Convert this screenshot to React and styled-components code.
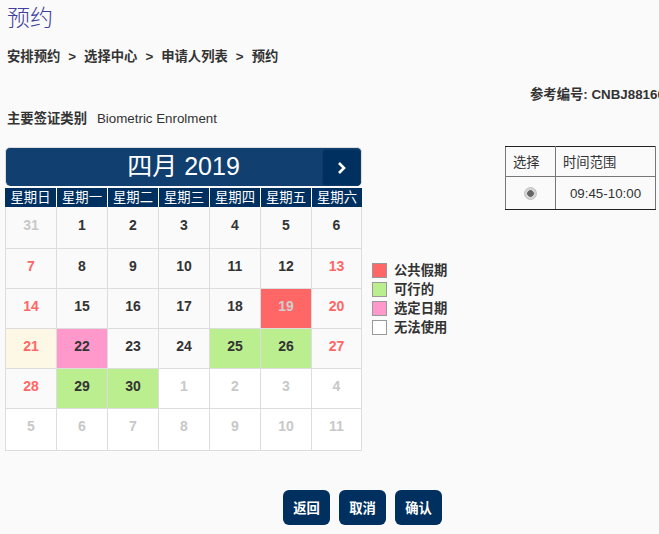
import React from 'react';
import styled, { createGlobalStyle } from 'styled-components';

const GlobalStyle = createGlobalStyle`
  html, body {
    margin: 0;
    padding: 0;
    background: #fafafa;
    overflow: hidden;
  }
  body {
    font-family: "Liberation Sans", "Noto Sans CJK SC", sans-serif;
    color: #333;
  }
`;

const Page = styled.div`
  width: 659px;
  height: 534px;
  overflow: hidden;
  box-sizing: border-box;
  padding: 4px 0 0 7px;
`;

const Title = styled.h1`
  margin: 0;
  font-size: 23px;
  line-height: 28px;
  font-weight: 300;
  color: #3f3f9f;
`;

const Breadcrumb = styled.div`
  display: flex;
  gap: 8px;
  margin-top: 16px;
  font-size: 13.33px;
  line-height: 17px;
  font-weight: 700;
`;

const RefLine = styled.div`
  margin: 21px 0 0 523px;
  font-size: 13.33px;
  line-height: 17px;
  font-weight: 700;
  white-space: nowrap;
`;

const VisaLine = styled.div`
  display: flex;
  gap: 10px;
  margin-top: 7px;
  font-size: 13.33px;
  line-height: 17px;
`;

const VisaLabel = styled.span`
  font-weight: 700;
`;

const Main = styled.div`
  display: flex;
  align-items: flex-start;
  margin: 20px 0 0 -2px;
`;

const Calendar = styled.div`
  width: 357px;
  flex: none;
`;

const MonthBar = styled.div`
  position: relative;
  box-sizing: border-box;
  height: 39px;
  border: 1px solid #ddd;
  border-bottom: none;
  border-radius: 5px;
  background: #114070;
  color: #fff;
  font-size: 25px;
  line-height: 37px;
  text-align: center;
`;

const NextButton = styled.button`
  position: absolute;
  top: 1px;
  right: 0;
  width: 39px;
  height: 37px;
  padding: 0;
  display: flex;
  align-items: center;
  justify-content: center;
  border: 1px solid #0f3a66;
  border-radius: 4px;
  background: #00305f;
`;

const WeekRow = styled.div`
  display: grid;
  grid-template-columns: repeat(7, 51px);
  margin-top: 2px;
`;

const WeekCell = styled.div`
  height: 19px;
  background: #00305f;
  color: #fff;
  font-size: 13.33px;
  line-height: 19px;
  text-align: center;
  white-space: nowrap;
  box-sizing: border-box;
  border-left: ${(p) => (p.$first ? 'none' : '1px solid #fff')};
`;

const DayGrid = styled.div`
  display: grid;
  grid-template-columns: repeat(7, 51px);
  grid-template-rows: 42px repeat(4, 40px) 42px;
`;

const dayColors = {
  normal: { bg: '#fafafa', fg: '#333' },
  muted: { bg: '#fafafa', fg: '#c8c8c8' },
  holiday: { bg: '#fafafa', fg: '#ff6666' },
  today: { bg: '#fdf8e6', fg: '#ff6666' },
  closed: { bg: '#ff6666', fg: '#cfcfcf' },
  open: { bg: '#bbee8f', fg: '#333' },
  selected: { bg: '#ff99cc', fg: '#333' },
  blank: { bg: '#fff', fg: '#c8c8c8' },
};

const DayCell = styled.div`
  box-sizing: border-box;
  padding-top: 9px;
  border-left: 1px solid #ddd;
  border-bottom: 1px solid #ddd;
  background: ${(p) => dayColors[p.$kind].bg};
  color: ${(p) => dayColors[p.$kind].fg};
  font-size: 14px;
  line-height: 16px;
  font-weight: 700;
  text-align: center;

  &:nth-child(-n + 7) {
    padding-top: 10px;
  }

  &:nth-child(7n) {
    border-right: 1px solid #ddd;
  }
`;

const Legend = styled.ul`
  list-style: none;
  margin: 116px 0 0 10px;
  padding: 0;
  width: 133px;
  flex: none;
  display: flex;
  flex-direction: column;
  gap: 4px;
`;

const LegendItem = styled.li`
  display: flex;
  align-items: center;
  gap: 7px;
  height: 15px;
  font-size: 13.33px;
  line-height: 14px;
  font-weight: 700;
`;

const Swatch = styled.span`
  width: 15px;
  height: 15px;
  box-sizing: border-box;
  border: 1px solid #999;
  background: ${(p) => p.$color};
`;

const SlotTable = styled.table`
  flex: none;
  width: 151px;
  margin-top: -1px;
  border-collapse: collapse;
  border: 1px solid #222;
  font-size: 13.33px;
  table-layout: fixed;
`;

const SlotHead = styled.th`
  box-sizing: border-box;
  height: 30px;
  padding: 0 0 0 7px;
  border: 1px solid #777;
  border-top-color: #222;
  font-weight: 400;
  text-align: left;
  width: ${(p) => p.$width || 'auto'};
`;

const SlotCell = styled.td`
  box-sizing: border-box;
  height: 33px;
  padding: 0;
  border: 1px solid #777;
  border-bottom-color: #222;
  text-align: center;
`;

const Radio = styled.input`
  appearance: none;
  display: inline-block;
  margin: 0;
  width: 13px;
  height: 13px;
  border-radius: 50%;
  border: 1px solid #c4c4c4;
  box-sizing: border-box;
  vertical-align: middle;
  background: radial-gradient(circle, #666 0 3px, #d4d4d4 3.6px);
`;

const Actions = styled.div`
  display: flex;
  gap: 9px;
  margin: 39px 0 0 276px;
`;

const ActionButton = styled.button`
  width: 47px;
  height: 35px;
  padding: 0;
  border: none;
  border-radius: 6px;
  background: #00305f;
  color: #fff;
  font-family: inherit;
  font-size: 13.33px;
  font-weight: 700;
`;

const weekDays = ['星期日', '星期一', '星期二', '星期三', '星期四', '星期五', '星期六'];

const days = [
  [31, 'muted'], [1, 'normal'], [2, 'normal'], [3, 'normal'], [4, 'normal'], [5, 'normal'], [6, 'normal'],
  [7, 'holiday'], [8, 'normal'], [9, 'normal'], [10, 'normal'], [11, 'normal'], [12, 'normal'], [13, 'holiday'],
  [14, 'holiday'], [15, 'normal'], [16, 'normal'], [17, 'normal'], [18, 'normal'], [19, 'closed'], [20, 'holiday'],
  [21, 'today'], [22, 'selected'], [23, 'normal'], [24, 'normal'], [25, 'open'], [26, 'open'], [27, 'holiday'],
  [28, 'holiday'], [29, 'open'], [30, 'open'], [1, 'blank'], [2, 'blank'], [3, 'blank'], [4, 'blank'],
  [5, 'blank'], [6, 'blank'], [7, 'blank'], [8, 'blank'], [9, 'blank'], [10, 'blank'], [11, 'blank'],
];

const legend = [
  ['公共假期', '#ff6666'],
  ['可行的', '#bbee8f'],
  ['选定日期', '#ff99cc'],
  ['无法使用', '#fff'],
];

const crumbs = ['安排预约', '>', '选择中心', '>', '申请人列表', '>', '预约'];

const App = () => (
  <Page>
    <GlobalStyle />
    <Title>预约</Title>
    <Breadcrumb>
      {crumbs.map((c, i) => (
        <span key={i}>{c}</span>
      ))}
    </Breadcrumb>
    <RefLine>参考编号: CNBJ881600</RefLine>
    <VisaLine>
      <VisaLabel>主要签证类别</VisaLabel>
      <span>Biometric Enrolment</span>
    </VisaLine>
    <Main>
      <Calendar>
        <MonthBar>
          四月 2019
          <NextButton aria-label="下个月">
            <svg width="10" height="14" viewBox="0 0 10 14">
              <path d="M2 2l5 5-5 5" fill="none" stroke="#fff" strokeWidth="2.6" />
            </svg>
          </NextButton>
        </MonthBar>
        <WeekRow>
          {weekDays.map((d, i) => (
            <WeekCell key={d} $first={i === 0}>{d}</WeekCell>
          ))}
        </WeekRow>
        <DayGrid>
          {days.map(([n, kind], i) => (
            <DayCell key={i} $kind={kind}>{n}</DayCell>
          ))}
        </DayGrid>
      </Calendar>
      <Legend>
        {legend.map(([label, color]) => (
          <LegendItem key={label}>
            <Swatch $color={color} />
            {label}
          </LegendItem>
        ))}
      </Legend>
      <SlotTable>
        <thead>
          <tr>
            <SlotHead $width="50px">选择</SlotHead>
            <SlotHead>时间范围</SlotHead>
          </tr>
        </thead>
        <tbody>
          <tr>
            <SlotCell><Radio type="radio" defaultChecked readOnly /></SlotCell>
            <SlotCell>09:45-10:00</SlotCell>
          </tr>
        </tbody>
      </SlotTable>
    </Main>
    <Actions>
      <ActionButton>返回</ActionButton>
      <ActionButton>取消</ActionButton>
      <ActionButton>确认</ActionButton>
    </Actions>
  </Page>
);

export default App;
